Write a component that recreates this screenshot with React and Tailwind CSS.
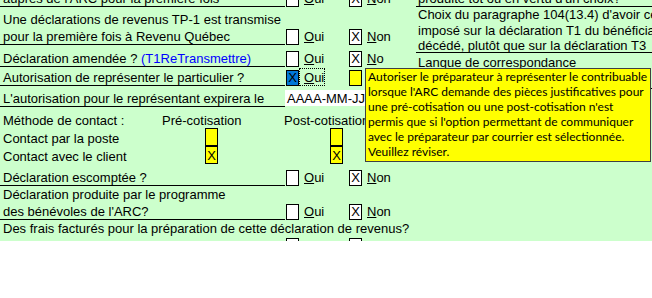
import React from 'react';

function Box({ x, fill = 'white', tall }) {
  const bg = fill === 'blue' ? 'bg-[#0078d7]' : fill === 'yellow' ? 'bg-[#ffff00]' : 'bg-white';
  const h = tall ? 'h-[18px]' : 'h-[16px]';
  return (
    <div className={`${bg} ${h} w-[13px] shrink-0 border border-black flex justify-center items-end text-[13px] leading-[14px]`}>
      {x ? 'X' : null}
    </div>
  );
}

function Label({ children }) {
  return (
    <div className="w-[285px] h-full shrink-0 border-b border-black flex flex-col justify-end pl-[3px] leading-[17px] whitespace-nowrap">
      <div className="-mb-px">{children}</div>
    </div>
  );
}

function YesNo({ no = true, noText = 'Non' }) {
  return (
    <div className="ml-px flex items-end h-full">
      <Box />
      <div className="w-[50px] pl-[5px] leading-[17px]">
        <u>O</u>ui
      </div>
      <Box x={no} />
      <div className="pl-[5px] leading-[17px] whitespace-nowrap">
        <u>N</u>{noText.slice(1)}
      </div>
    </div>
  );
}

const tip = [
  'Autoriser le préparateur à représenter le contribuable',
  "lorsque l'ARC demande des pièces justificatives pour",
  "une pré-cotisation ou une post-cotisation n'est",
  "permis que si l'option permettant de communiquer",
  'avec le préparateur par courrier est sélectionnée.',
  'Veuillez réviser.',
];

export default function App() {
  return (
    <div className="w-[652px] h-[298px] overflow-hidden bg-white text-black text-[13px] font-['Liberation_Sans',Arial,sans-serif]">
      <div className="relative h-[241px] overflow-hidden bg-[#ccffcc] flex">
        {/* left column */}
        <div className="w-[416px] shrink-0 -mt-[13px]">
          <div className="flex items-end h-[20px]">
            <Label>auprès de l'ARC pour la première fois</Label>
            <YesNo />
          </div>
          <div className="flex items-end h-[38px]">
            <Label>
              <div>Une déclarations de revenus TP-1 est transmise</div>
              <div>pour la première fois à Revenu Québec</div>
            </Label>
            <YesNo />
          </div>
          <div className="flex items-end h-[22px]">
            <Label>
              Déclaration amendée ? <span className="text-[#0000ff]">(T1ReTransmettre)</span>
            </Label>
            <YesNo noText="No" />
          </div>
          <div className="flex items-end h-[19px]">
            <Label>Autorisation de représenter le particulier ?</Label>
            <div className="ml-px flex items-end h-full">
              <Box x fill="blue" />
              <div className="w-[50px] flex items-end">
                <span className="w-[26px] h-[18px] border border-dotted border-black flex items-end pl-[4px] leading-[15px]">
                  <span>
                    <u>O</u>ui
                  </span>
                </span>
              </div>
              <Box fill="yellow" />
            </div>
          </div>
          <div className="flex items-end h-[21px]">
            <Label>L'autorisation pour le représentant expirera le</Label>
            <div className="w-[100px] h-[16px] mb-px bg-white pl-[2px] leading-[15px] flex items-end">AAAA-MM-JJ</div>
          </div>
          <div className="flex items-end h-[21px] leading-[15px] whitespace-nowrap">
            <span className="w-[162px] pl-[3px]">Méthode de contact :</span>
            <span className="w-[122px]">Pré-cotisation</span>
            <span>Post-cotisation</span>
          </div>
          <div className="flex items-end h-[18px] leading-[15px]">
            <span className="w-[205px] pl-[3px]">Contact par la poste</span>
            <Box fill="yellow" tall />
            <span className="w-[112px]" />
            <Box fill="yellow" tall />
          </div>
          <div className="flex items-end h-[18px] leading-[15px]">
            <span className="w-[205px] pl-[3px]">Contact avec le client</span>
            <Box fill="yellow" tall x />
            <span className="w-[112px]" />
            <Box fill="yellow" tall x />
          </div>
          <div className="flex items-end h-[22px]">
            <Label>Déclaration escomptée ?</Label>
            <YesNo />
          </div>
          <div className="flex items-end h-[34px]">
            <Label>
              <div>Déclaration produite par le programme</div>
              <div>des bénévoles de l'ARC?</div>
            </Label>
            <YesNo />
          </div>
          <div className="h-[17px] pl-[3px] leading-[17px] whitespace-nowrap">
            Des frais facturés pour la préparation de cette déclaration de revenus?
          </div>
          <div className="flex items-end h-[17px]">
            <Label>&nbsp;</Label>
            <div className="ml-px flex items-end h-full">
              <Box />
              <div className="w-[50px]" />
              <Box />
            </div>
          </div>
        </div>

        {/* right column */}
        <div className="flex-1 -mt-[12px] whitespace-nowrap">
          <div className="h-[19px] border-b border-black flex flex-col justify-end pl-[2px] leading-[17px]">
            <div className="-mb-px">produite tôt ou en vertu d'un choix?</div>
          </div>
          <div className="h-[46px] border-b border-black pl-[2px] leading-[15.5px]">
            <div>Choix du paragraphe 104(13.4) d'avoir ce revenu</div>
            <div>imposé sur la déclaration T1 du bénéficiaire</div>
            <div>décédé, plutôt que sur la déclaration T3</div>
          </div>
          <div className="h-[36px] border-b border-black pl-[2px] pt-px leading-[17px]">Langue de correspondance</div>
        </div>

        {/* tooltip */}
        <div className="absolute left-[365px] top-[68px] w-[286px] h-[94px] bg-[#ffff00] border border-[#404040] pl-[2px] text-[12px] leading-[15px] font-['Lato',sans-serif] whitespace-nowrap">
          {tip.map((t) => (
            <div key={t}>{t}</div>
          ))}
        </div>
      </div>
    </div>
  );
}
